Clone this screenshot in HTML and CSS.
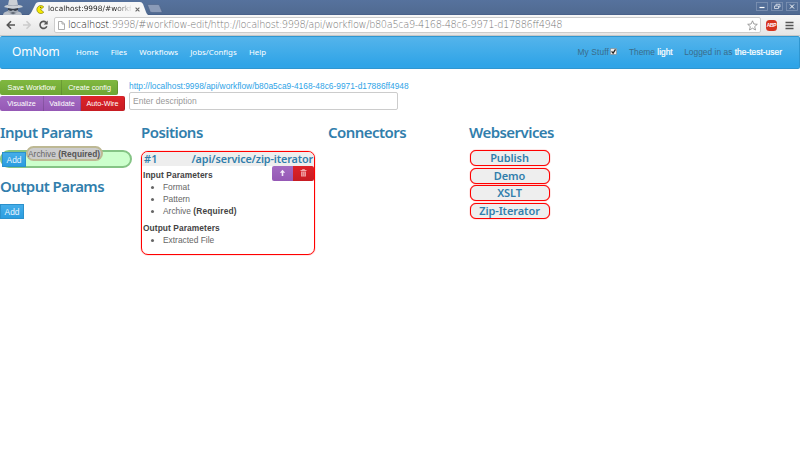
FILE: index.html
```html
<!DOCTYPE html>
<html lang="en">
<head>
<meta charset="utf-8">
<title>OmNom workflow editor</title>
<link rel="stylesheet" href="styles.css">
</head>
<body>
<header class="titlebar">
  <svg class="incognito" width="28" height="15" viewBox="0 0 28 15"><path d="M3 15q0-3 5-4h9q5 1 5 4z" fill="#b9bfc8"/><path d="M8 6h10v6l-5 3-5-3z" fill="#a3abb5"/><path d="M4 7q1-2 4-2L9 0h8l1 5q4 0 5 2l-4 1H8z" fill="#cbd0d6"/><path d="M8 4.500q5 1.500 10 0v1.500H8z" fill="#a4acb8"/><path d="M8 8l4 1h2l4-1v2l-3 1-2-1-2 1-3-1z" fill="#343c48"/><path d="M10 13l3-1 3 1-3 1z" fill="#59616d"/></svg>
  <svg class="tabshape" width="125" height="16" viewBox="0 0 125 16"><path d="M-2 16q4-.5 5.500-4L7 5q1-3 4-3h101q2 0 3 2l3 8q1 3.500 5 4z" fill="#f7f7f7"/></svg>
  <div class="tab">
    <svg width="9" height="9" viewBox="0 0 9 9"><path d="M7.800 1.900A4 4 0 1 0 7.800 7.200L4.600 4.600z" fill="#f5ea00" stroke="#777100" stroke-width=".6"/><circle cx="4.700" cy="2.300" r=".6" fill="#333"/></svg>
    <span class="tabtitle">localhost:9998/#workf</span>
    <svg class="close" width="5" height="5" viewBox="0 0 5 5"><path d="M.6.6l3.800 3.800M4.400.6L.6 4.400" stroke="#666" stroke-width="1.100"/></svg>
  </div>
  <svg class="newtab" width="16" height="9" viewBox="0 0 16 9"><path d="M1.500.5h9q1.500 0 2 1l2.500 6q.3 1-1 1H5q-1.500 0-2-1L.7 1.500q-.3-1 .8-1z" fill="#8b9bb8" stroke="#4c6288" stroke-width=".6"/></svg>
  <div class="winbtns">
    <svg width="12" height="9" viewBox="0 0 12 9"><rect x=".5" y=".5" width="11" height="8" fill="none" stroke="#7f93b3" stroke-width=".8"/><path d="M3.500 5.500h5" stroke="#fff" stroke-width="1.200"/></svg>
    <svg width="12" height="9" viewBox="0 0 12 9"><rect x=".5" y=".5" width="11" height="8" fill="none" stroke="#7f93b3" stroke-width=".8"/><path d="M5 4V2.300h4V5H7.500M3.500 4h4v2.500h-4z" fill="none" stroke="#dfe5ee" stroke-width=".8"/></svg>
    <svg width="12" height="9" viewBox="0 0 12 9"><rect x=".5" y=".5" width="11" height="8" fill="none" stroke="#7f93b3" stroke-width=".8"/><path d="M4 2.500l4 4M8 2.500l-4 4" stroke="#fff"/></svg>
  </div>
</header>
<div class="toolbar">
  <svg class="arrows" width="46" height="12" viewBox="0 0 46 12"><path d="M9 6H1.500M5 2.300L1.300 6 5 9.700" fill="none" stroke="#555" stroke-width="1.600"/><path d="M17 6h7M20.500 2.300L24.200 6l-3.700 3.700" fill="none" stroke="#ccc" stroke-width="1.600"/><path d="M40 3.400a3.500 3.500 0 1 0 .8 3.800" fill="none" stroke="#555" stroke-width="1.600"/><path d="M41.700 1.500v4h-4z" fill="#555"/></svg>
  <div class="address">
    <svg class="doc" width="7" height="9" viewBox="0 0 7 9"><path d="M.5.500H4L6.500 3v5.500h-6zM4 .5V3h2.500" fill="#fff" stroke="#999" stroke-width=".8"/></svg>
    <span class="url"><b>localhost</b>:9998/#workflow-edit/http://localhost:9998/api/workflow/b80a5ca9-4168-48c6-9971-d17886ff4948</span>
    <svg class="star" width="11" height="11" viewBox="0 0 11 11"><path d="M5.500.8L6.900 4l3.400.3-2.600 2.300.8 3.400-3-1.800L2.500 10l.8-3.400L.7 4.300 4.100 4z" fill="#fff" stroke="#888" stroke-width=".8"/></svg>
  </div>
  <div class="abp">ABP</div>
  <svg class="menu" width="9" height="9" viewBox="0 0 9 9"><path d="M.5 1.500h8M.5 4.500h8M.5 7.500h8" stroke="#555" stroke-width="1.700"/></svg>
</div>
<nav class="navbar">
  <span class="brand">OmNom</span>
  <a>Home</a><a>Files</a><a>Workflows</a><a>Jobs/Configs</a><a>Help</a>
  <div class="right">
    <span class="stuff">My Stuff</span><svg class="check" width="7" height="7" viewBox="0 0 7 7"><rect x=".4" y=".4" width="6.200" height="6.200" rx=".7" fill="#eee" stroke="#777" stroke-width=".6"/><path d="M1.600 3.400l1.500 1.700 2.400-3.700" fill="none" stroke="#222" stroke-width="1.300"/></svg>
    <span class="theme">Theme <i>light</i></span>
    <span class="login">Logged in as <i>the-test-user</i></span>
  </div>
</nav>
<section class="top">
  <div class="buttons">
    <div class="row"><span class="btn green b1">Save Workflow</span><span class="btn green b2">Create config</span></div>
    <div class="row"><span class="btn purple b3">Visualize</span><span class="btn purple b4">Validate</span><span class="btn red b5">Auto-Wire</span></div>
  </div>
  <div class="meta">
    <a class="link">http://localhost:9998/api/workflow/b80a5ca9-4168-48c6-9971-d17886ff4948</a>
    <div class="desc">Enter description</div>
  </div>
</section>
<main class="columns">
  <section class="col c1">
    <h2>Input Params</h2>
    <div class="drop"><span class="add">Add</span><span class="chip">Archive <b>(Required)</b></span></div>
    <h2 class="second">Output Params</h2>
    <span class="add out">Add</span>
  </section>
  <section class="col c2">
    <h2>Positions</h2>
    <div class="card">
      <div class="cardhead"><span class="num">#1</span><span class="svc">/api/service/zip-iterator</span></div>
      <div class="cardbtns"><span class="cb purple"><svg width="7" height="8" viewBox="0 0 7 8"><path d="M3.500.8L6.200 3.800H4.300V7H2.700V3.800H.8z" fill="#f2eaf7"/></svg></span><span class="cb red"><svg width="7" height="8" viewBox="0 0 7 8"><path d="M.5 1.500h6M2.500 1.300V.6h2v.7" fill="none" stroke="#f8c9c9" stroke-width=".8"/><path d="M1 2.500h5v5H1z" fill="#ee9a9c"/><path d="M2.600 3.300v3.400M4.400 3.300v3.400" stroke="#d64044" stroke-width=".5"/></svg></span></div>
      <b class="sub s1">Input Parameters</b>
      <ul><li>Format</li><li>Pattern</li><li>Archive <b>(Required)</b></li></ul>
      <b class="sub s2">Output Parameters</b>
      <ul><li>Extracted File</li></ul>
    </div>
  </section>
  <section class="col c3"><h2>Connectors</h2></section>
  <section class="col c4">
    <h2>Webservices</h2>
    <div class="ws">Publish</div>
    <div class="ws">Demo</div>
    <div class="ws">XSLT</div>
    <div class="ws">Zip-Iterator</div>
  </section>
</main>
</body>
</html>
```
FILE: styles.css
```css
* { box-sizing: border-box; }
body { margin: 0; width: 800px; height: 450px; overflow: hidden; background: #fff; color: #666; font: 8.4px/12px "Liberation Sans", Arial, sans-serif; }
svg { display: block; flex: none; }
i { font-style: normal; }
span, a { white-space: nowrap; }

.titlebar { position: relative; display: flex; height: 15px; background: linear-gradient(#56729d, #506a91); border-bottom: 1px solid #49618a; }
.tabshape { position: absolute; left: 28px; top: 0; }
.tab { position: relative; display: flex; align-items: center; margin-left: 8px; width: 107px; height: 16px; padding-top: 2px; }
.tabtitle { width: 83px; margin-left: 3px; overflow: hidden; font: 7.4px/12px "DejaVu Sans", sans-serif; color: transparent; background: linear-gradient(90deg, #222 80%, #ddd); background-clip: text; -webkit-background-clip: text; }
.close { margin-left: 4px; }
.newtab { margin: 4px 0 0 4px; }
.winbtns { display: flex; gap: 3px; margin: 2px 2px 0 auto; }

.toolbar { position: relative; display: flex; align-items: center; height: 21px; background: linear-gradient(#f7f7f7, #e5e5e5); border-bottom: 1px solid #c8c8c8; }
.arrows { margin-left: 6px; }
.address { display: flex; align-items: center; width: 707px; margin-left: 2px; height: 16px; padding: 0 2px 0 3px; background: #fff; border: 1px solid #ccc; border-radius: 2px; }
.doc { margin-right: 3px; }
.url { font: 200 9.8px/14px "DejaVu Sans", sans-serif; letter-spacing: -.355px; color: #777; }
.url b { font-weight: 200; color: #111; }
.star { margin-left: auto; }
.abp { width: 11px; height: 11px; margin-left: 5px; border-radius: 3.5px; background: #d6331f; color: #fff; font: bold 5px/11px "Liberation Sans", sans-serif; text-align: center; letter-spacing: -.3px; }
.menu { margin-left: 8px; }

.navbar { display: flex; align-items: center; height: 33px; padding: 0 17px 2px 12px; border: 1px solid #2f96d0; border-width: 1px 1px 1px 0; border-radius: 2px; background: linear-gradient(#54b4eb, #2fa4e7 90%, #2fa4e7); color: #fff; font: 7.9px/14px "Noto Sans", sans-serif; }
.navbar a { margin-right: 12.2px; }
.brand { width: 64px; font-size: 12px; letter-spacing: -.1px; }
.right { display: flex; align-items: center; margin-left: auto; color: #3b6c8a; font: 8.4px/14px "Liberation Sans", sans-serif; }
.right i { color: #fff; -webkit-text-stroke: .2px #fff; }
.stuff { letter-spacing: .1px; }
.check { margin-left: 1px; }
.theme { margin-left: 12px; }
.login { margin-left: 11.5px; letter-spacing: .02px; }

.top { display: flex; height: 54px; padding-top: 11px; }
.buttons { width: 129px; }
.row { display: flex; height: 15px; }
.row + .row { margin-top: 1px; }
.btn { height: 15px; color: #fff; font-size: 7.2px; line-height: 15px; text-align: center; border-right: 1px solid #0002; }
.btn:first-child { border-radius: 2px 0 0 2px; }
.btn:last-child { border-radius: 0 2px 2px 0; }
.green { background: linear-gradient(#80b840, #6ea634); }
.purple { background: linear-gradient(#a36bc2, #9558b5); }
.red { background: linear-gradient(#dd2329, #c71c22); }
.b1 { width: 62px; padding-left: 2px; } .b2 { width: 56px; }
.b3 { width: 44px; } .b4 { width: 37px; } .b5 { width: 44px; }
.link { display: block; height: 12px; color: #2fa4e7; line-height: 13px; font-size: 8.37px; }
.desc { width: 269px; height: 18px; padding-left: 3px; border: 1px solid #ccc; border-radius: 2px; color: #999; font-size: 8.5px; line-height: 16px; }

.columns { display: flex; }
.c1 { width: 141px; } .c2 { width: 187px; } .c3 { width: 141px; } .c4 { width: 90px; }
h2 { margin: 0; height: 27px; color: #317eac; font: 600 15px/18px "Noto Sans", sans-serif; letter-spacing: -.55px; white-space: nowrap; }
.drop { position: relative; display: flex; width: 132px; height: 18px; border: 2px solid #85c485; border-radius: 9px; background: #cfc; }
.add { width: 24px; height: 15px; background: linear-gradient(#45ade9, #2a9de0); border: 1px solid #2b91cc; color: #e9f6ff; line-height: 15px; text-align: center; }
.chip { position: absolute; left: 24px; top: -6px; width: 77px; height: 15px; border: 2px solid #bdb893; border-radius: 8px; background: #ccc; line-height: 12px; }
.chip b { color: #555; }
.second { margin-top: 9px; }
.out { display: block; }
.card { position: relative; width: 174px; height: 104px; margin-top: .5px; border: 1px solid #f00; border-radius: 7px; overflow: hidden; box-shadow: 0 0 1px #f00; }
.cardhead { display: flex; justify-content: space-between; height: 14px; padding: 0 1px 0 2px; background: #eee; color: #317eac; font: 600 10.8px/14px "Noto Sans", sans-serif; letter-spacing: -.13px; }
.num { letter-spacing: .3px; }
.cardbtns { position: absolute; right: 0; top: 14px; display: flex; border-radius: 2px; overflow: hidden; }
.cb { width: 21px; height: 15px; display: grid; place-items: center; }
.sub { display: block; padding-top: 3px; padding-left: 1px; height: 15px; color: #444; letter-spacing: .08px; }
.s2 { margin-top: 2px; }
ul { margin: 0; padding-left: 21px; }
ul b { color: #444; letter-spacing: .15px; }
.ws { width: 80px; height: 16px; margin: .5px 0 1.6px .5px; border: 1px solid #f00; border-radius: 6px; box-shadow: 0 0 1px #f00; background: #eee; color: #317eac; font: 600 11px/14px "Noto Sans", sans-serif; letter-spacing: -.1px; text-align: center; }
h2 + .ws { margin-top: 0; }
.ws + .ws { margin-top: 0; }
```
